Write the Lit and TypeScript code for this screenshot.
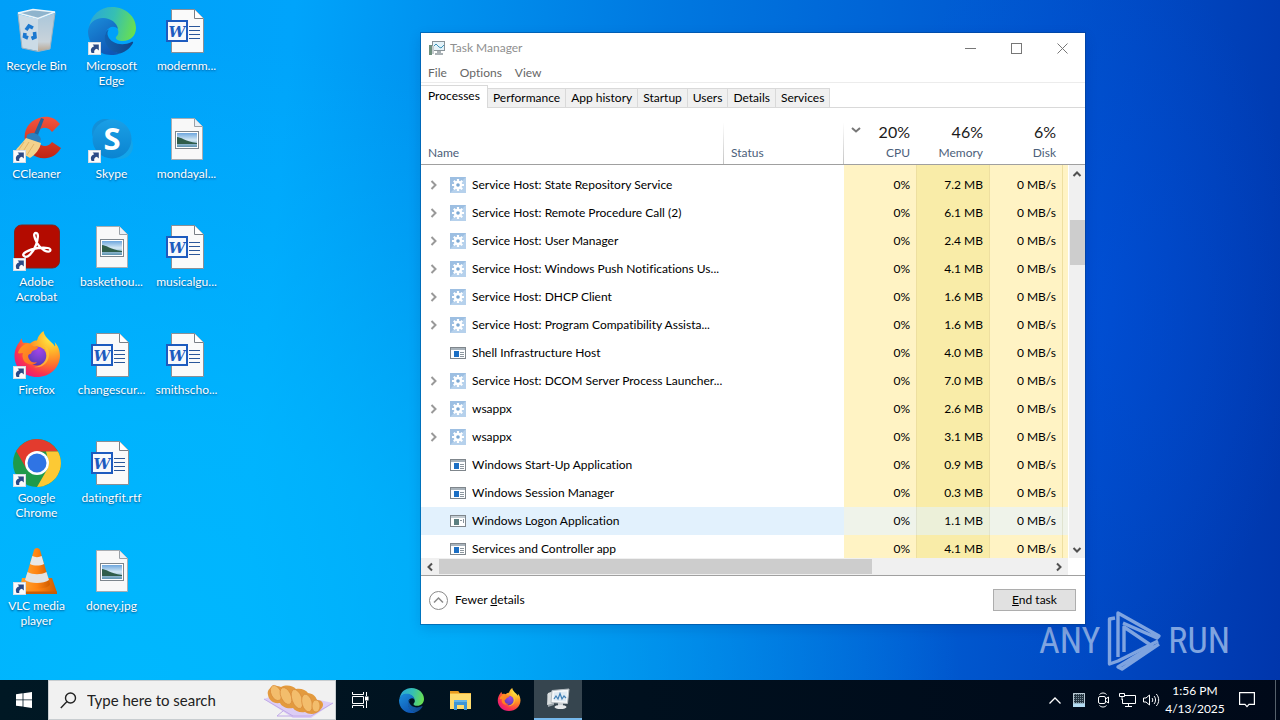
import { LitElement, html, css, svg, nothing } from "lit";
import { customElement } from "lit/decorators.js";
import { classMap } from "lit/directives/class-map.js";

const shortcut = svg`
  <rect x="0.5" y="35.500" width="12" height="12" fill="#fbfbfb" stroke="#d5dde6"/>
  <path d="M3.600 46C2 42.500 3.200 40.300 6.200 39.300L4.600 37.400H10.800V43.400L8.900 41.800C6.600 42.300 5.800 43.800 6.300 46Z" fill="#2c4a86"/>`;

const edgeArt = svg`
  <defs>
    <linearGradient id="eTop" x1="0" y1="0.300" x2="1" y2="0.500"><stop offset="0" stop-color="#2aa7d8"/><stop offset=".5" stop-color="#35bfb4"/><stop offset="1" stop-color="#68df51"/></linearGradient>
    <linearGradient id="eMid" x1="0" y1="0" x2="0.600" y2="1"><stop offset="0" stop-color="#1b8fdc"/><stop offset="1" stop-color="#0f57b4"/></linearGradient>
    <linearGradient id="eLow" x1="0" y1="0.500" x2="1" y2="0.500"><stop offset="0" stop-color="#1262b2"/><stop offset="1" stop-color="#114488"/></linearGradient>
  </defs>
  <path d="M1 20C3 8 12 0 24 0C38 0 48 10 48 21C48 29 42 34 35 34C30 34 27 32 28 30C30 28 31 26 30 23C28 15 20 11 13 12C7 13 3 16 1 20Z" fill="url(#eTop)"/>
  <path d="M0 24C1 16 7 11 15 11C23 11 29 16 30 22C26 18 20 20 18 25C15 34 21 44 32 46.500C29 48 26 48 23 48C10 48 0 37 0 24Z" fill="url(#eMid)"/>
  <path d="M18 25C14 34 20 45 32 46.500C38 45 43 40 45 36C45.500 35 44.500 34.400 43.500 35C35 39.500 23 37 20 29C19 26.500 19.500 24 21 22.500C19.500 23 18.500 24 18 25Z" fill="url(#eLow)"/>`;

const foxArt = svg`
  <defs>
    <radialGradient id="fBody" cx=".8" cy=".15" r="1"><stop offset="0" stop-color="#fff04a"/><stop offset=".3" stop-color="#ffb42a"/><stop offset=".55" stop-color="#ff7a2a"/><stop offset=".8" stop-color="#fa3350"/><stop offset="1" stop-color="#e31587"/></radialGradient>
    <radialGradient id="fGlobe" cx=".6" cy=".2" r=".9"><stop offset="0" stop-color="#a244e8"/><stop offset=".6" stop-color="#7040c8"/><stop offset="1" stop-color="#4a37a8"/></radialGradient>
    <linearGradient id="fHead" x1="0" y1="0" x2="1" y2="1"><stop offset="0" stop-color="#ff9a1f"/><stop offset="1" stop-color="#ff6a26"/></linearGradient>
  </defs>
  <path d="M24 46C11 46 1.500 36.500 1.500 25C1.500 19 4 14 6.500 11C7 9.500 8 8 9 7.500C8.800 9.500 9.500 11 10.500 12C12 11.500 15 11.500 17 12.500C20 10 22 9.500 24 9.500C25 5 28 1.500 30.500 0C31 4 34 7.500 38 11C40 12.500 41 14 42 15.500C42.500 14 42 12 41.500 11C45.500 15 47 20 47 25C46.500 37 37 46 24 46Z" fill="url(#fBody)"/>
  <circle cx="24" cy="25" r="9.500" fill="url(#fGlobe)"/>
  <path d="M5 22C7 15 13 12 17 13C19 15 22 16 25 16C25 18 22 19 19.500 20C18 21 18.500 23 17 23C14.500 23.500 15 26 16 28C18 31.500 21 32 24 31C21 35 14 34 11 30C9.500 27 9 24 10 22C8 22 6 23 5 22Z" fill="url(#fHead)"/>
  <path d="M33 14C37 19 37 27 33 32C30 35.500 25 37 21 36C30 35 34 29 33.500 22C33.500 19 32 16 31 15Z" fill="#ffc63a" opacity=".7"/>`;

const art: Record<string, unknown> = {
  bin: svg`
    <defs><linearGradient id="binG" x1="0" y1="0" x2="0" y2="1"><stop offset="0" stop-color="#a9c6da"/><stop offset=".75" stop-color="#c9d3da"/><stop offset="1" stop-color="#b9a58f"/></linearGradient></defs>
    <path d="M5 7L25 12V44L9 41Z" fill="#cbdbe6"/><path d="M25 12L42 6L37 42L25 44.500Z" fill="url(#binG)"/>
    <path d="M5 6L20 2.500L42 5L25 11.500Z" fill="#8fb4cd" stroke="#eef5f9" stroke-width="1.500"/>
    <path d="M5 7L9 41L25 44.500L37 42L42 6" fill="none" stroke="#9fb3c0"/>
    <g fill="none" stroke="#1b78cf" stroke-width="3.600"><path d="M13 23L16 19L20 21"/><path d="M21.500 25L22 30L18.500 31.500"/><path d="M15 31L11.500 29.500L12 26"/></g>`,
  edge: edgeArt,
  firefox: foxArt,
  ccleaner: svg`
    <defs><linearGradient id="ccG" x1="0" y1="0" x2="0" y2="1"><stop offset="0" stop-color="#f4553d"/><stop offset="1" stop-color="#c02412"/></linearGradient></defs>
    <path d="M47 9C42 2 33 0 26 3C16 6 10 15 12 26C14 38 24 45 34 43C41 42 45 38 48 33L39 27C36 31 32 32 28 30C23 27 22 20 25 16C28 12 35 11 39 17Z" fill="url(#ccG)"/>
    <path d="M28 3L31 4L25 20L21 19Z" fill="#24639c"/>
    <path d="M14 20C18 16 26 18 28 24L26 29L13 25Z" fill="#2d7fbd"/>
    <path d="M13 23L28 28C27 34 22 40 17 43L10 39L2 38C2 34 8 30 13 23Z" fill="#f3d28c"/>
    <path d="M11 27L5 36M16 27L9 38M21 29L14 40" stroke="#e0b468" fill="none"/>`,
  skype: svg`
    <defs><linearGradient id="skG" x1="0" y1="0" x2="0" y2="1"><stop offset="0" stop-color="#1a9fe6"/><stop offset="1" stop-color="#0b84d0"/></linearGradient></defs>
    <circle cx="17" cy="17" r="13" fill="#1390d8"/><circle cx="32" cy="31" r="13" fill="#13a5ea"/>
    <circle cx="24" cy="24" r="19.500" fill="url(#skG)"/>
    <text class="skype-letter" x="24" y="35" text-anchor="middle">S</text>`,
  acrobat: svg`
    <rect x="1.500" y="2" width="45" height="43" rx="7" fill="#b30b00" stroke="#7d2720"/>
    <path d="M11 33C8 31 14 27 25 25C33 24 39 25 37 28C35 30 28 27 24 20C21 14 20 10 23 10C26 10 25 16 23 22C20 30 14 36 11 33Z" fill="none" stroke="#fff" stroke-width="2.300"/>`,
  chrome: svg`
    <circle cx="24" cy="24" r="24" fill="#1e9a4b"/>
    <path d="M3.200 12L13.600 30L24 24V12.500H45A24 24 0 0 0 3.200 12Z" fill="#e33b2e"/>
    <path d="M45 12.500A24 24 0 0 1 24 48L34.400 30L36 24L33 12.500Z" fill="#fcc934"/>
    <circle cx="24" cy="24" r="12" fill="#fff"/><circle cx="24" cy="24" r="9.500" fill="#2f74e4"/>`,
  vlc: svg`
    <defs><linearGradient id="vlG" x1="0" y1="0" x2="1" y2="0"><stop offset="0" stop-color="#ffa22f"/><stop offset=".5" stop-color="#ff8412"/><stop offset="1" stop-color="#cf5c00"/></linearGradient></defs>
    <path d="M9 31H39L44 45.500H6Z" fill="url(#vlG)"/><path d="M6 44.500H44V47H6Z" fill="#c95d06"/>
    <path d="M24 1C26 1 26.500 2 27 3L37 37C37 43 11 43 11 37L21 3C21.500 2 22 1 24 1Z" fill="url(#vlG)"/>
    <path d="M19.300 9C22 10.500 26 10.500 28.700 9L31 17C27 19 21 19 17 17Z" fill="#e8e8e8"/>
    <path d="M14.500 25C20 28 28 28 33.500 25L36 33C31 37 17 37 12 33Z" fill="#e2e2e2"/>`,
  word: svg`
    <path d="M8.500 2.500H31.500L40.500 11.500V45.500H8.500Z" fill="#fafafa" stroke="#8a8f96"/>
    <path d="M31.500 2.500V11.500H40.500" fill="#fff" stroke="#7a7f86"/>
    <path d="M26 19.500H37M26 23.500H37M26 27.500H37M26 31.500H37" stroke="#2b579a"/>
    <rect x="4" y="14" width="20" height="20" fill="#f7f9fc" stroke="#1d5bbf" stroke-width="2"/>
    <text class="word-letter" x="14" y="30" text-anchor="middle">W</text>`,
  image: svg`
    <defs><linearGradient id="imG" x1="0" y1="0" x2="0" y2="1"><stop offset="0" stop-color="#6ea6dd"/><stop offset=".5" stop-color="#d5e9f5"/><stop offset="1" stop-color="#5d93b0"/></linearGradient></defs>
    <path d="M8.500 3.500H31.500L39.500 11.500V44.500H8.500Z" fill="#f8f8f8" stroke="#a8adb2"/>
    <path d="M31.500 3.500V11.500H39.500" fill="#e8f0f7" stroke="#9aa0a6"/>
    <rect x="12.500" y="16.500" width="23" height="17" fill="#fff" stroke="#7d858c"/>
    <rect x="14" y="18" width="20" height="14" fill="url(#imG)"/>
    <path d="M14 22C18 22 21 26 34 28V29H14Z" fill="#2f5d4a"/>`,
};

const deskItems: [string, string, boolean][] = [
  ["bin", "Recycle Bin", false],
  ["ccleaner", "CCleaner", true],
  ["acrobat", "Adobe Acrobat", true],
  ["firefox", "Firefox", true],
  ["chrome", "Google Chrome", true],
  ["vlc", "VLC media player", true],
  ["edge", "Microsoft Edge", true],
  ["skype", "Skype", true],
  ["image", "baskethou...", false],
  ["word", "changescur...", false],
  ["word", "datingfit.rtf", false],
  ["image", "doney.jpg", false],
  ["word", "modernm...", false],
  ["image", "mondayal...", false],
  ["word", "musicalgu...", false],
  ["word", "smithscho...", false],
];

type Kind = "gear" | "app" | "logon";
const processes: [Kind, string, string][] = [
  ["gear", "Service Host: State Repository Service", "7.2 MB"],
  ["gear", "Service Host: Remote Procedure Call (2)", "6.1 MB"],
  ["gear", "Service Host: User Manager", "2.4 MB"],
  ["gear", "Service Host: Windows Push Notifications Us...", "4.1 MB"],
  ["gear", "Service Host: DHCP Client", "1.6 MB"],
  ["gear", "Service Host: Program Compatibility Assista...", "1.6 MB"],
  ["app", "Shell Infrastructure Host", "4.0 MB"],
  ["gear", "Service Host: DCOM Server Process Launcher...", "7.0 MB"],
  ["gear", "wsappx", "2.6 MB"],
  ["gear", "wsappx", "3.1 MB"],
  ["app", "Windows Start-Up Application", "0.9 MB"],
  ["app", "Windows Session Manager", "0.3 MB"],
  ["logon", "Windows Logon Application", "1.1 MB"],
  ["app", "Services and Controller app", "4.1 MB"],
];

const rowIcon = (kind: Kind) =>
  kind === "gear"
    ? html`<svg width="16" height="16" viewBox="0 0 16 16">
        <rect width="16" height="16" fill="#9dbfe2"/><path d="M0 16L16 0V16Z" fill="#b6d1ec"/>
        <path d="M8 2V14M2 8H14M3.800 3.800L12.200 12.200M12.200 3.800L3.800 12.200" stroke="#fff" stroke-width="2.200"/>
        <circle cx="8" cy="8" r="4.200" fill="#fff"/>
        <circle cx="8" cy="8" r="1.800" fill="#7ba7d2"/>
      </svg>`
    : html`<svg width="16" height="16" viewBox="0 0 16 16">
        <rect x="0.500" y="2.500" width="15" height="11" fill="#fff" stroke="#7f868c"/>
        <path d="M1 3H15V5H1Z" fill=${kind === "app" ? "#a9b3bb" : "#c3ccd2"}/>
        <rect x="4" y="6" width="5" height="6" fill=${kind === "app" ? "#1c6fc4" : "#5c7f80"}/>
        <path d=${kind === "app" ? "M10 7.500H14M10 9.500H14M10 11.500H14" : "M10 7.500H12M13.500 6V10"} stroke="#8d979f"/>
      </svg>`;

const chevron = (d: string) => html`<svg width="10" height="10" viewBox="0 0 10 10"><path d=${d} fill="none" stroke="currentColor" stroke-width="2"/></svg>`;

@customElement("app-root")
export class AppRoot extends LitElement {
  static styles = css`
    :host {
      display: flex;
      flex-direction: column;
      height: 100vh;
      overflow: hidden;
      font-family: Lato, "Open Sans", sans-serif;
      font-size: 12px;
      font-variant-ligatures: none;
      line-height: 16px;
      color: #000;
    }
    * { box-sizing: border-box; }
    button, input { font: inherit; font-variant-ligatures: none; color: inherit; margin: 0; padding: 0; border: 0; background: none; border-radius: 0; }
    svg { display: block; flex: none; }

    .desktop {
      position: relative;
      flex: 1;
      min-height: 0;
      background:
        radial-gradient(ellipse 18% 55% at 84% 45%, rgba(0, 84, 240, 0.35), rgba(0, 84, 240, 0) 100%),
        radial-gradient(ellipse 65% 95% at 10% 100%, rgba(0, 186, 255, 0.9), rgba(0, 186, 255, 0.7) 40%, rgba(0, 186, 255, 0) 100%),
        linear-gradient(95deg, #009ff8 0%, #00a4fb 22%, #0092ef 33%, #0078e0 50%, #005cd2 72%, #004ac4 85%, #0036ac 100%);
    }
    .icons {
      display: grid;
      grid-auto-flow: column;
      grid-template-rows: repeat(6, 108px);
      grid-auto-columns: 75px;
      padding-top: 7px;
      margin-left: -1px;
      height: 100%;
      width: max-content;
    }
    .item {
      display: flex;
      flex-direction: column;
      align-items: center;
      gap: 3px;
      color: #fff;
      line-height: 15px;
      text-shadow: 0 1px 2px rgba(0, 40, 90, 0.7);
    }
    .item span { padding: 0 4px; }
    .item .clip { padding: 0; white-space: nowrap; }
    .word-letter { font: italic bold 15px "DejaVu Serif", serif; fill: #1d5bbf; text-shadow: none; }
    .skype-letter { font: bold 31px "Open Sans", sans-serif; fill: #fff; text-shadow: none; }

    .watermark {
      position: absolute;
      right: 50px;
      bottom: 8px;
      display: flex;
      align-items: center;
      gap: 6px;
      color: #7fa4e0;
      font: 36px/48px "Roboto Condensed", "Open Sans Condensed", "Liberation Sans Narrow", "DejaVu Sans Condensed", sans-serif;
    }

    .window {
      position: absolute;
      left: 421px;
      top: 33px;
      bottom: 56px;
      width: 664px;
      display: flex;
      flex-direction: column;
      background: #fff;
      box-shadow: 0 0 0 1px rgba(0, 60, 130, 0.45), 0 4px 12px rgba(0, 20, 80, 0.15);
    }
    .title { display: flex; align-items: center; height: 30px; padding-left: 8px; gap: 5px; color: #8f8f8f; }
    .title h1 { flex: 1; margin: 0; font-size: 12px; font-weight: 400; }
    .captions { display: flex; }
    .caption { width: 46px; height: 30px; display: grid; place-items: center; color: #777; }
    .menu { display: flex; gap: 13px; padding: 2px 7px 0; height: 19px; color: #666; }
    .menu button { height: 16px; }
    .tabs {
      display: flex;
      align-items: flex-end;
      height: 26px;
      border-top: 1px solid #ececec;
      background: linear-gradient(#d9d9d9, #d9d9d9) bottom / 100% 1px no-repeat;
    }
    .tab { height: 20px; padding: 0 5px; background: #f0f0f0; border: 1px solid #d9d9d9; border-left: 0; white-space: nowrap; }
    .tab.on { height: 23px; padding: 0 7px 3px; background: #fff; border-bottom: 0; }

    .grid { flex: 1; min-height: 0; display: flex; }
    .rows { flex: 1; min-width: 0; overflow: hidden; }
    table { width: 100%; table-layout: fixed; border-collapse: separate; border-spacing: 0; }
    .c-status { width: 120px; }
    .c-num { width: 73px; }
    .c-end { width: 5px; }
    th {
      height: 57px;
      padding: 0 7px 3px;
      vertical-align: bottom;
      text-align: left;
      font-weight: 400;
      color: #4c607a;
      border-bottom: 1px solid #a0a0a0;
      background: linear-gradient(rgba(200, 200, 200, 0), #c4c4c4) right bottom / 1px 42px no-repeat;
    }
    th.last { background: none; }
    th.num, td.num { text-align: right; }
    th strong { display: block; font-size: 16px; line-height: 22px; font-weight: 400; color: #1a1a1a; margin-bottom: 2px; }
    .sort { display: flex; justify-content: space-between; }
    .sort svg { margin-top: 4px; color: #777; }
    td { height: 28px; padding: 0; white-space: nowrap; }
    .lead td { height: 6px; }
    .num, .end { background: #fff3c4; }
    .num { border-right: 1px solid #eedfa0; }
    .mem { background: #f9eca8; }
    thead .num { background-color: #fff; border-right: 0; }
    .picked td { background: #e2f1fd; }
    .picked .num, .picked .end { background: #eff3ea; border-color: #e0e3cf; }
    .picked .mem { background: #ecf0d9; }
    td.num { padding-right: 6px; }
    .name { display: flex; align-items: center; height: 28px; padding-left: 8px; }
    .twist { flex: none; width: 21px; height: 16px; color: #999; display: flex; align-items: center; }
    .name span { padding-left: 6px; }
    .vbar { width: 17px; display: flex; flex-direction: column; }
    .vcap { height: 57px; border-bottom: 1px solid #a0a0a0; }
    .vtrack { flex: 1; margin-left: 1px; display: flex; flex-direction: column; align-items: center; background: #f0f0f0; color: #505050; }
    .arrow { width: 16px; height: 17px; display: grid; place-items: center; }
    .vgap { height: 38px; }
    .vthumb { width: 15px; height: 45px; background: #cdcdcd; }
    .spring { flex: 1; }
    .hbar { display: flex; align-items: center; height: 17px; margin-right: 17px; background: #f0f0f0; color: #505050; }
    .hbar .arrow { width: 18px; }
    .hthumb { flex: 0 0 67%; height: 15px; background: #cdcdcd; }
    .foot { display: flex; align-items: center; justify-content: space-between; height: 49px; border-top: 1px solid #a0a0a0; padding: 0 9px 0 8px; }
    .fewer { display: flex; align-items: center; gap: 7px; }
    .end-task { width: 83px; height: 22px; background: #e1e1e1; border: 1px solid #adadad; }

    .taskbar { display: flex; height: 40px; background: linear-gradient(90deg, #001824, #00101e 50%, #000919); color: #fff; }
    .start { width: 48px; display: grid; place-items: center; }
    .search { display: flex; align-items: center; width: 288px; background: #f1f1f1; border: 1px solid #c8cdd0; padding-left: 11px; color: #222; }
    .search input { flex: 1; min-width: 0; margin-left: 10px; font-size: 15px; line-height: 20px; outline: none; }
    .search input::placeholder { color: #222; opacity: 1; }
    .pin { width: 48px; display: grid; place-items: center; margin-right: 1px; }
    .pin.view { margin-right: 3px; }
    .pin.active { background: #36454f; border-bottom: 2px solid #76b9ed; }
    .tray { display: flex; margin-left: auto; align-items: stretch; }
    .tray button { width: 24px; display: grid; place-items: center; }
    .tray .clock { width: 64px; display: block; line-height: 18px; white-space: nowrap; }
    .tray .note { width: 40px; }
    .tray .peek { width: 5px; margin-left: 8px; border-left: 1px solid #56616b; }
  `;

  private tmIcon(size: number) {
    return html`<svg width=${size} height=${size} viewBox="0 0 24 24" aria-hidden="true">
      <path d="M1 7L8 4V18L2 20Z" fill="#9aa4aa"/><path d="M2 6L8 4V16L1 18Z" fill="#d9dedf"/>
      <path d="M6 3.500L23 2L21.500 16.500L5 15.500Z" fill="#f5f7f8" stroke="#b4bbc0"/>
      <path d="M8 5.500L21 4.500L20 14.500L7.500 13.500Z" fill="#dfeaf3"/>
      <path d="M8 12L10 9L12 12L14 6.500L16 12L18 9L20 11" fill="none" stroke="#3f7fb5" stroke-width="1.200"/>
      <path d="M12 16H17V19H12Z" fill="#c9ced2"/><ellipse cx="14.500" cy="20" rx="6" ry="2" fill="#e6e9eb"/>
    </svg>`;
  }

  render() {
    return html`
      <main class="desktop">
        <div class="icons">
          ${deskItems.map(
            ([key, label, link]) => html`<button class="item">
              <svg width="48" height="48" viewBox="0 0 48 48" aria-hidden="true">${art[key]}${link ? shortcut : nothing}</svg>
              <span class=${classMap({ clip: !label.includes(" ") })}>${label}</span>
            </button>`
          )}
        </div>
        <div class="watermark">
          <span>ANY</span>
          <svg width="56" height="62" viewBox="0 0 56 62" aria-hidden="true" fill="none" stroke="#7fa4e0" stroke-width="3.400" stroke-linejoin="round">
            <path d="M9 8L3.500 9V54L12 51L52 31"/><path d="M12 47V3L53 26L51 28L17 13"/><path d="M53 34L16 59L12 57L46 36L18 17V42"/>
          </svg>
          <span>RUN</span>
        </div>
        <section class="window" aria-label="Task Manager">
          <header class="title">
            <svg width="16" height="16" viewBox="0 0 16 16" aria-hidden="true">
              <rect x="3.500" y="1.500" width="12" height="9" fill="#e4f2f8" stroke="#8a9499"/>
              <path d="M4 7L7 4L10 7L12 8L15 5" fill="none" stroke="#3d93b8"/>
              <path d="M8 11H12V13H14V15H6V13H8Z" fill="#a9b1b5"/>
              <rect x="0" y="5" width="3" height="10" fill="#6f8f7d"/><path d="M3 6H5V14H3Z" fill="#c5cccf"/>
            </svg>
            <h1>Task Manager</h1>
            <div class="captions">
              <button class="caption" aria-label="Minimize"><svg width="11" height="11" viewBox="0 0 11 11"><path d="M0 5.500H11" stroke="currentColor"/></svg></button>
              <button class="caption" aria-label="Maximize"><svg width="11" height="11" viewBox="0 0 11 11"><rect x=".5" y=".5" width="10" height="10" fill="none" stroke="currentColor"/></svg></button>
              <button class="caption" aria-label="Close"><svg width="11" height="11" viewBox="0 0 11 11"><path d="M.5 .5L10.500 10.500M10.500 .5L.5 10.500" stroke="currentColor"/></svg></button>
            </div>
          </header>
          <nav class="menu"><button>File</button><button>Options</button><button>View</button></nav>
          <div class="tabs" role="tablist">
            ${["Processes", "Performance", "App history", "Startup", "Users", "Details", "Services"].map(
              (t, i) => html`<button role="tab" aria-selected=${i === 0} class=${classMap({ tab: true, on: i === 0 })}>${t}</button>`
            )}
          </div>
          <div class="grid">
            <div class="rows">
              <table>
                <colgroup><col /><col class="c-status" /><col class="c-num" /><col class="c-num" /><col class="c-num" /><col class="c-end" /></colgroup>
                <thead>
                  <tr>
                    <th>Name</th>
                    <th>Status</th>
                    <th class="num"><div class="sort">${chevron("M1 3L5 6.500L9 3")}<strong>20%</strong></div>CPU</th>
                    <th class="num"><strong>46%</strong>Memory</th>
                    <th class="num"><strong>6%</strong>Disk</th>
                    <th class="last"></th>
                  </tr>
                </thead>
                <tbody>
                  <tr class="lead"><td></td><td></td><td class="num"></td><td class="num mem"></td><td class="num"></td><td class="end"></td></tr>
                  ${processes.map(
                    ([kind, name, mem]) => html`<tr class=${classMap({ picked: kind === "logon" })}>
                      <td><div class="name">
                        ${kind === "gear" ? html`<button class="twist" aria-label="Expand">${chevron("M2.500 1L6.500 5L2.500 9")}</button>` : html`<i class="twist"></i>`}
                        ${rowIcon(kind)}<span>${name}</span>
                      </div></td>
                      <td></td>
                      <td class="num">0%</td>
                      <td class="num mem">${mem}</td>
                      <td class="num">0 MB/s</td>
                      <td class="end"></td>
                    </tr>`
                  )}
                </tbody>
              </table>
            </div>
            <div class="vbar">
              <div class="vcap"></div>
              <div class="vtrack">
                <button class="arrow" aria-label="Scroll up">${chevron("M1.500 7L5 3.500L8.500 7")}</button>
                <div class="vgap"></div>
                <div class="vthumb"></div>
                <div class="spring"></div>
                <button class="arrow" aria-label="Scroll down">${chevron("M1.500 3L5 6.500L8.500 3")}</button>
              </div>
            </div>
          </div>
          <div class="hbar">
            <button class="arrow" aria-label="Scroll left">${chevron("M7 1.500L3.500 5L7 8.500")}</button>
            <div class="hthumb"></div>
            <div class="spring"></div>
            <button class="arrow" aria-label="Scroll right">${chevron("M3 1.500L6.500 5L3 8.500")}</button>
          </div>
          <footer class="foot">
            <button class="fewer">
              <svg width="19" height="19" viewBox="0 0 19 19" fill="none" stroke="#8a8a8a"><circle cx="9.500" cy="9.500" r="9"/><path d="M5 11.500L9.500 7L14 11.500" stroke-width="1.500"/></svg>
              <span>Fewer <u>d</u>etails</span>
            </button>
            <button class="end-task"><u>E</u>nd task</button>
          </footer>
        </section>
      </main>
      <footer class="taskbar">
        <button class="start" aria-label="Start"><svg width="16" height="16" viewBox="0 0 16 16" fill="#fff"><path d="M0 2.300L6.600 1.300V7.500H0ZM7.400 1.200L16 0V7.500H7.400ZM0 8.300H6.600V14.600L0 13.700ZM7.400 8.300H16V16L7.400 14.700Z"/></svg></button>
        <label class="search">
          <svg width="17" height="17" viewBox="0 0 17 17" fill="none" stroke="#222" stroke-width="1.400"><circle cx="10.500" cy="6" r="5"/><path d="M7 9.600L.8 16"/></svg>
          <input type="text" aria-label="Search" placeholder="Type here to search" />
          <svg width="72" height="38" viewBox="0 0 72 38" aria-hidden="true">
            <path d="M1 18L20 11L70 22L48 37H30Z" fill="#dccdf5"/><path d="M1 18L30 35M20 30L14 35H48L70 22" fill="none" stroke="#c0aae8"/>
            <path d="M5 14C3 7 12 3 18 6C24 3 30 5 33 8C38 7 43 9 45 12C51 13 53 16 54 19C60 19 62 24 58 28C54 34 46 34 42 31C37 32 32 30 30 27C24 28 19 26 17 22C10 23 6 19 5 14Z" fill="#e39a3e"/>
            <g fill="#f3bd6c" stroke="#d98b3a" stroke-width=".7"><ellipse cx="13" cy="12" rx="5" ry="8" transform="rotate(-25 13 12)"/><ellipse cx="23" cy="15" rx="5" ry="9" transform="rotate(-25 23 15)"/><ellipse cx="34" cy="18" rx="5" ry="10" transform="rotate(-20 34 18)"/><ellipse cx="44" cy="22" rx="5" ry="9" transform="rotate(-15 44 22)"/><ellipse cx="53" cy="25" rx="4" ry="6"/></g>
          </svg>
        </label>
        <button class="pin view" aria-label="Task View"><svg width="17" height="16" viewBox="0 0 17 16" fill="none" stroke="#fff"><path d="M.5 0V2.500H11.500V0M.5 16V13.500H11.500V16M.5 4.500H11.500V11.500H.5ZM14.500 0V4M14.500 9V16"/><rect x="13.500" y="5" width="2.500" height="3" fill="#fff"/></svg></button>
        <button class="pin" aria-label="Microsoft Edge"><svg width="25" height="25" viewBox="0 0 48 48">${edgeArt}</svg></button>
        <button class="pin" aria-label="File Explorer"><svg width="23" height="20" viewBox="0 0 23 20"><path d="M1 1H9L10.500 3H22V19H1Z" fill="#f5b73c"/><path d="M1 4H22V19H1Z" fill="#ffdc6e"/><path d="M1 1H9L10.500 3H1Z" fill="#e89b1f"/><path d="M5 10H18V20H15V15H8V20H5Z" fill="#3f96d6"/><path d="M5 10H18V12H5Z" fill="#64b4e8"/></svg></button>
        <button class="pin" aria-label="Firefox"><svg width="24" height="24" viewBox="0 0 48 48">${foxArt}</svg></button>
        <button class="pin active" aria-label="Task Manager">${this.tmIcon(24)}</button>
        <div class="tray">
          <button aria-label="Show hidden icons"><svg width="12" height="7" viewBox="0 0 12 7" fill="none" stroke="#fff" stroke-width="1.300"><path d="M.5 6.500L6 1L11.500 6.500"/></svg></button>
          <button aria-label="Touch keyboard"><svg width="12" height="14" viewBox="0 0 12 14"><rect width="12" height="14" fill="#7d929f"/><path d="M0 2.500H12M0 4.500H12M0 6.500H12M0 8.500H12M2.500 0V10M4.500 0V10M6.500 0V10M8.500 0V10M10.500 0V10" stroke="#243440"/><path d="M.5 .5H11.500V13.500H.5Z" fill="none" stroke="#b8c8d2"/><rect y="10.500" width="12" height="3.500" fill="#b4dcf4"/></svg></button>
          <button aria-label="Meet Now"><svg width="13" height="16" viewBox="0 0 13 16" fill="none" stroke="#fff"><rect x="1.500" y="4.500" width="7" height="7" rx="1.500"/><path d="M8.500 7L11.500 5V11L8.500 9M2.500 2.500C4.500 .5 7.500 .5 9.500 2.500M2.500 13.500C4.500 15.500 7.500 15.500 9.500 13.500"/></svg></button>
          <button aria-label="Network"><svg width="17" height="14" viewBox="0 0 17 14" fill="none" stroke="#fff"><path d="M6 2.500H16.500V10.500H3.500V6M9.500 10.500V13.500M6 13.500H13"/><path d="M.5 .5H5.500V3.500H.5ZM3 3.500V7"/></svg></button>
          <button aria-label="Volume"><svg width="17" height="14" viewBox="0 0 17 14" fill="none" stroke="#fff"><path d="M.5 5H3L6.500 2V12L3 9H.5ZM9 5C10 6.200 10 7.800 9 9M11 3C13 5.200 13 8.800 11 11M13.300 1C16.500 4.500 16.500 9.500 13.300 13"/></svg></button>
          <button class="clock"><div>1:56 PM</div><div>4/13/2025</div></button>
          <button class="note" aria-label="Notifications"><svg width="16" height="16" viewBox="0 0 16 16" fill="none" stroke="#fff" stroke-width="1.200"><path d="M.6 .6H15.400V12.400H10L8 14.600L6 12.400H.6Z"/></svg></button>
          <button class="peek" aria-label="Show desktop"></button>
        </div>
      </footer>
    `;
  }
}
